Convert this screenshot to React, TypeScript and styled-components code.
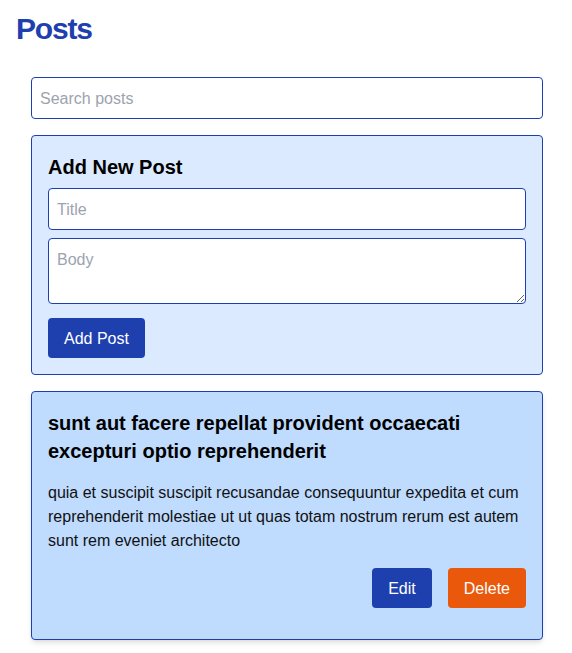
import React, { useState } from "react";
import styled, { createGlobalStyle } from "styled-components";

const GlobalStyle = createGlobalStyle`
  html, body { margin: 0; padding: 0; background: #ffffff; }
  body { font-family: "Liberation Sans", Arial, sans-serif; color: #111111; }
  * { box-sizing: border-box; }
`;

const Page = styled.div`
  padding: 8px 8px 12px;
`;

const Title = styled.h1`
  margin: 0 0 0 8px;
  padding-top: 3px;
  font-size: 30px;
  line-height: 36px;
  font-weight: 700;
  letter-spacing: -1.2px;
  color: #1e40af;
`;

const Main = styled.main`
  width: 512px;
  margin: 30px 0 0 23px;
  display: flex;
  flex-direction: column;
  gap: 16px;
`;

const TextInput = styled.input`
  display: block;
  width: 100%;
  height: 42px;
  padding: 9px 8px 7px;
  font: 16px/24px "Liberation Sans", Arial, sans-serif;
  color: #111111;
  background: #ffffff;
  border: 1px solid #1e40af;
  border-radius: 4px;
  outline: none;
  &::placeholder { color: #9ca3af; }
`;

const TextArea = styled.textarea`
  display: block;
  width: 100%;
  height: 66px;
  padding: 9px 8px 7px;
  font: 16px/24px "Liberation Sans", Arial, sans-serif;
  color: #111111;
  background: #ffffff;
  border: 1px solid #1e40af;
  border-radius: 4px;
  outline: none;
  &::placeholder { color: #9ca3af; }
`;

const Card = styled.section<{ $tone: "light" | "mid"; $shadow?: boolean }>`
  display: flex;
  flex-direction: column;
  padding: 16px;
  border: 1px solid #1e40af;
  border-radius: 4px;
  background: ${(p) => (p.$tone === "light" ? "#dbeafe" : "#bfdbfe")};
  box-shadow: ${(p) =>
    p.$shadow
      ? "0 4px 6px -1px rgba(0,0,0,0.1), 0 2px 4px -2px rgba(0,0,0,0.1)"
      : "none"};
`;

const Heading = styled.h2`
  margin: 0;
  padding-top: 1px;
  font-size: 20px;
  line-height: 28px;
  font-weight: 700;
  color: #000000;
`;

const FormBody = styled.div`
  display: flex;
  flex-direction: column;
  gap: 8px;
  margin-top: 7px;
`;

const PostText = styled.p`
  margin: 15px 0 0;
  padding-top: 1px;
  font-size: 16px;
  line-height: 24px;
  color: #111111;
`;

const Actions = styled.div`
  display: flex;
  justify-content: flex-end;
  gap: 16px;
  margin: 15px 0 15px;
`;

const Button = styled.button<{ $variant: "primary" | "danger" }>`
  height: 40px;
  padding: 1px 16px 0;
  font: 16px/24px "Liberation Sans", Arial, sans-serif;
  color: #ffffff;
  border: none;
  border-radius: 4px;
  cursor: pointer;
  background: ${(p) => (p.$variant === "primary" ? "#1e40af" : "#ea580c")};
`;

const SubmitRow = styled.div`
  display: flex;
  margin-top: 14px;
`;

const posts = [
  {
    id: 1,
    title:
      "sunt aut facere repellat provident occaecati excepturi optio reprehenderit",
    body:
      "quia et suscipit suscipit recusandae consequuntur expedita et cum reprehenderit molestiae ut ut quas totam nostrum rerum est autem sunt rem eveniet architecto",
  },
];

export default function App() {
  const [search, setSearch] = useState("");
  const [title, setTitle] = useState("");
  const [body, setBody] = useState("");

  const visible = posts.filter((p) =>
    p.title.toLowerCase().includes(search.toLowerCase())
  );

  return (
    <>
      <GlobalStyle />
      <Page>
        <Title>Posts</Title>
        <Main>
          <TextInput
            placeholder="Search posts"
            value={search}
            onChange={(e) => setSearch(e.target.value)}
          />
          <Card $tone="light">
            <Heading>Add New Post</Heading>
            <FormBody>
              <TextInput
                placeholder="Title"
                value={title}
                onChange={(e) => setTitle(e.target.value)}
              />
              <TextArea
                placeholder="Body"
                value={body}
                onChange={(e) => setBody(e.target.value)}
              />
            </FormBody>
            <SubmitRow>
              <Button $variant="primary">Add Post</Button>
            </SubmitRow>
          </Card>
          {visible.map((p) => (
            <Card key={p.id} $tone="mid" $shadow>
              <Heading>{p.title}</Heading>
              <PostText>{p.body}</PostText>
              <Actions>
                <Button $variant="primary">Edit</Button>
                <Button $variant="danger">Delete</Button>
              </Actions>
            </Card>
          ))}
        </Main>
      </Page>
    </>
  );
}
